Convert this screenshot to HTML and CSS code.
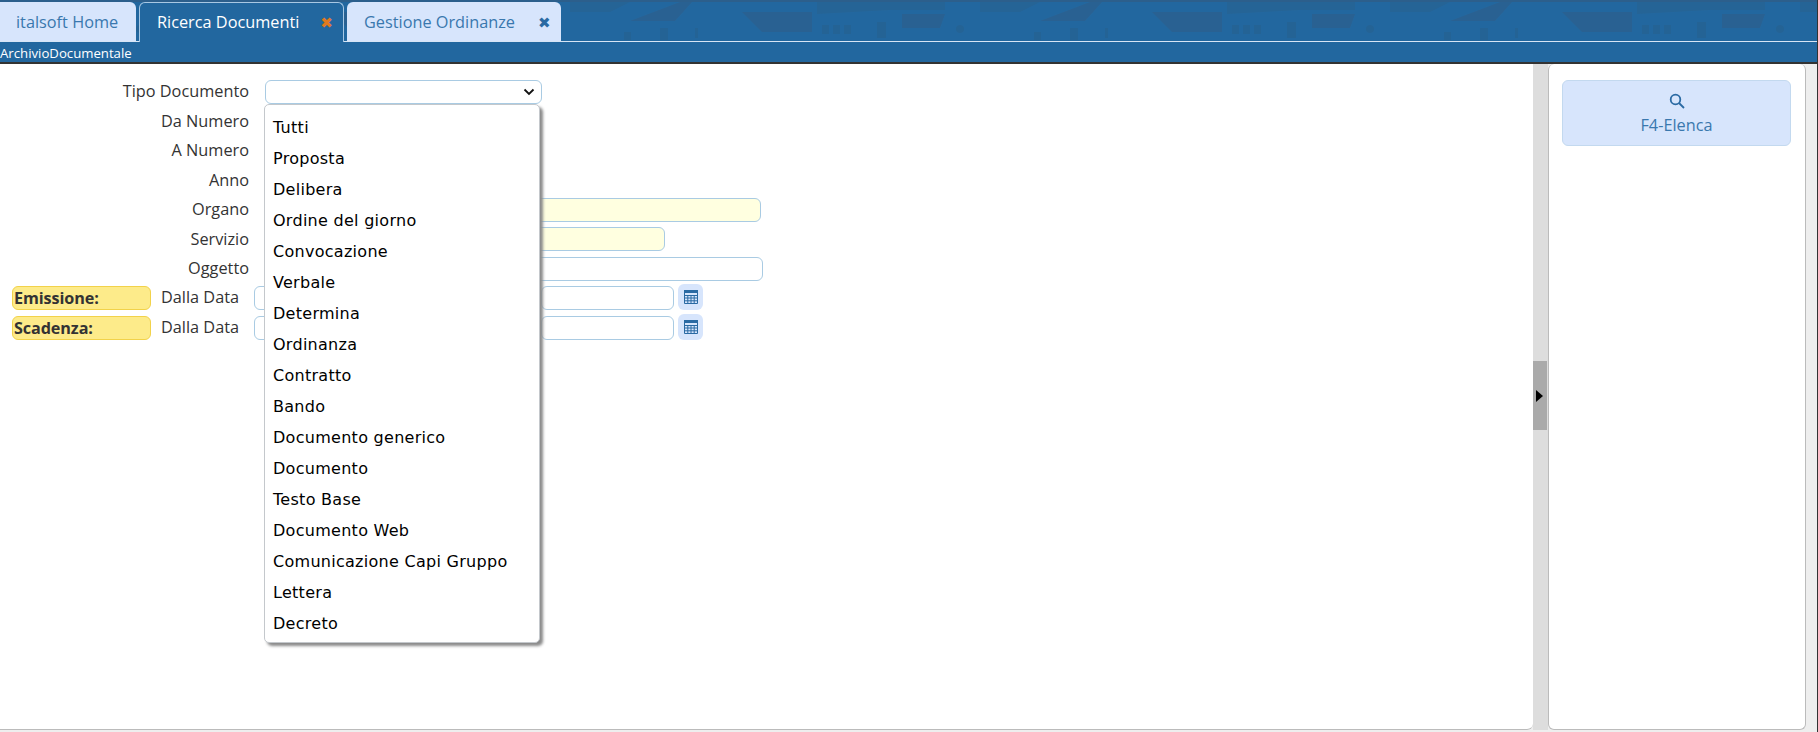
FILE: index.html
```html
<!DOCTYPE html>
<html lang="it">
<head>
<meta charset="utf-8">
<title>Ricerca Documenti</title>
<link rel="stylesheet" href="styles.css">
</head>
<body>
<header class="top">
  <svg class="pattern" width="1818" height="41" aria-hidden="true">
    <defs>
      <pattern id="skyline" patternUnits="userSpaceOnUse" width="410" height="41" patternTransform="translate(330 0)">
        <rect class="strip" width="410" height="2"/>
        <path class="d1" d="M2 12H72V32H22ZM162 14H205L200 28H162ZM300 21L350 2H362L345 21Z"/>
        <path class="d2" d="M77 2H205V10H150L77 14ZM240 2H300L280 12H240Z"/>
        <path class="d3" d="M82 25h7v9h-7ZM93 25h7v9h-7ZM104 25h7v9h-7ZM137 22h9v16h-9ZM294 32h7v8h-7ZM330 28h8v12h-8ZM365 28h3v10h-3Z"/>
        <circle class="d3" cx="220" cy="29" r="4"/>
      </pattern>
    </defs>
    <rect width="1818" height="41" fill="url(#skyline)"/>
  </svg>
  <nav class="tabs">
    <div class="tab tab-home">italsoft Home</div>
    <div class="tab tab-active">Ricerca Documenti<span class="close close-orange">✖</span></div>
    <div class="tab tab-third">Gestione Ordinanze<span class="close">✖</span></div>
  </nav>
  <div class="crumb">ArchivioDocumentale</div>
</header>
<main class="work">
  <section class="panel panel-main">
    <form class="form">
      <div class="row"><label class="lab">Tipo Documento</label>
        <div class="select"><svg class="chev" viewBox="0 0 12 8"><path d="M1.500 1.500 6 6l4.500-4.500"/></svg></div></div>
      <div class="row"><label class="lab">Da Numero</label><span class="field w-num"></span></div>
      <div class="row"><label class="lab">A Numero</label><span class="field w-num"></span></div>
      <div class="row"><label class="lab">Anno</label><span class="field w-num"></span></div>
      <div class="row"><label class="lab">Organo</label><span class="field yellow w-org"></span></div>
      <div class="row"><label class="lab">Servizio</label><span class="field yellow w-ser"></span></div>
      <div class="row"><label class="lab">Oggetto</label><span class="field w-ogg"></span></div>
      <div class="row date-row">
        <span class="tag">Emissione:</span><span class="dal">Dalla Data</span>
        <span class="field w-date"></span><span class="field w-date2"></span>
        <span class="cal"><svg viewBox="0 0 14 14"><path class="cal-head" d="M0 0H14V3H0Z"/><path class="cal-grid" d="M.5.5H13.500V13.500H.5ZM.5 5.500H13.500M.5 8H13.500M.5 10.800H13.500M3.800 5.500V13.500M7 5.500V13.500M10.200 5.500V13.500"/></svg></span>
      </div>
      <div class="row date-row">
        <span class="tag">Scadenza:</span><span class="dal">Dalla Data</span>
        <span class="field w-date"></span><span class="field w-date2"></span>
        <span class="cal"><svg viewBox="0 0 14 14"><path class="cal-head" d="M0 0H14V3H0Z"/><path class="cal-grid" d="M.5.5H13.500V13.500H.5ZM.5 5.500H13.500M.5 8H13.500M.5 10.800H13.500M3.800 5.500V13.500M7 5.500V13.500M10.200 5.500V13.500"/></svg></span>
      </div>
    </form>
    <ul class="menu">
      <li>Tutti</li><li>Proposta</li><li>Delibera</li><li>Ordine del giorno</li><li>Convocazione</li><li>Verbale</li><li>Determina</li><li>Ordinanza</li><li>Contratto</li><li>Bando</li><li>Documento generico</li><li>Documento</li><li>Testo Base</li><li>Documento Web</li><li>Comunicazione Capi Gruppo</li><li>Lettera</li><li>Decreto</li>
    </ul>
  </section>
  <div class="splitter"><div class="handle"><span class="arrow"></span></div></div>
  <aside class="panel panel-side">
    <button class="action" type="button">
      <svg viewBox="0 0 16 16"><circle cx="6.500" cy="6.500" r="4.800"/><path d="m10 10 5 5"/></svg>
      <span>F4-Elenca</span>
    </button>
  </aside>
</main>
</body>
</html>
```
FILE: styles.css
```css
* { box-sizing: border-box; }
html, body { margin: 0; height: 100%; }
body {
  width: 1818px; height: 732px; overflow: hidden;
  display: flex; flex-direction: column;
  background: #eee;
  border-right: 1px solid #333;
  font-family: "Open Sans", sans-serif;
  color: #333;
}
.top {
  position: relative; height: 64px; flex: none;
  background: #22679f;
  border-bottom: 2px solid #333;
}
.pattern { position: absolute; left: 0; top: 0; }
.strip { fill: #2c5f8c; }
.d1 { fill: #296192; }
.d2 { fill: #256496; }
.d3 { fill: #246395; }
.tabs {
  position: relative; display: flex; height: 42px; padding-top: 2px; gap: 3px;
  border-bottom: 1px solid #d7e5f5;
}
.tab {
  height: 39px; padding: 0 16px; border-radius: 6px 6px 0 0;
  background: #d7e5fc; color: #3a78ae;
  font-size: 16.300px; line-height: 40px; white-space: nowrap;
}
.tab-home { width: 136px; border-radius: 0 6px 0 0; }
.tab-active {
  width: 205px; height: 40px; padding-left: 17px;
  background: #22679f; color: #fff;
  border: 1px solid #a8c8e4; border-bottom: 0;
  line-height: 38px;
}
.tab-third { width: 214px; padding-left: 17px; }
.close { margin-left: 23px; font-size: 15px; font-family: "DejaVu Sans", sans-serif; color: #2a6aa3; }
.close-orange { color: #e07a1f; margin-left: 21px; }
.crumb { position: relative; height: 20px; color: #fff; font-size: 13.200px; line-height: 23px; }

.work { flex: 1; display: flex; min-height: 0; padding-bottom: 2px; }
.panel { position: relative; background: #fff; border-bottom: 1px solid #bbb; }
.panel-main { width: 1533px; border-radius: 0 0 6px 0; padding-top: 13px; }
.splitter { width: 15px; background: #ddd; display: flex; align-items: center; }
.handle {
  width: 14px; height: 69px; background: #aaa; margin-top: -3px;
  display: flex; align-items: center; padding-left: 3px;
}
.arrow { width: 0; height: 0; border-left: 7px solid #000; border-top: 6px solid transparent; border-bottom: 6px solid transparent; }
.panel-side {
  width: 258px; border: 1px solid #bbb; border-top: 0; border-radius: 6px;
  padding: 16px 13px;
}
.action {
  display: flex; flex-direction: column; align-items: center; gap: 5px;
  width: 229px; height: 66px; padding: 12px 0 0;
  background: #d7e5fc; border: 1px solid #c3d9ef; border-radius: 6px;
  color: #3a78ae; font: 16.300px "Open Sans", sans-serif;
}
.action svg { width: 16px; height: 16px; fill: none; stroke: #2a6aa3; stroke-width: 1.800; }

.form { display: flex; flex-direction: column; }
.row { display: flex; align-items: center; height: 29.500px; }
.lab { width: 249px; padding-bottom: 1px; text-align: right; font-size: 16.300px; margin-right: 16px; flex: none; }
.select, .field { height: 24px; border: 1px solid #a9cbe3; border-radius: 6px; background: #fff; flex: none; }
.select { position: relative; width: 277px; }
.chev { position: absolute; right: 6px; top: 7px; width: 12px; height: 8px; fill: none; stroke: #111; stroke-width: 1.800; }
.w-num { width: 120px; }
.yellow { background: #ffffe0; }
.w-org { width: 496px; }
.w-ser { width: 400px; }
.w-ogg { width: 498px; }
.date-row { padding-left: 12px; }
.tag {
  width: 139px; height: 24px; flex: none; padding-left: 1px;
  background: #fdeb8a; border: 1px solid #f2d24a; border-radius: 6px;
  font-size: 16.200px; font-weight: 700; line-height: 22px; color: #333; letter-spacing: -.1px;
}
.dal { width: 103px; padding: 0 0 2px 10px; flex: none; font-size: 16.300px; }
.w-date { width: 132px; margin-right: 155px; }
.w-date2 { width: 133px; }
.cal {
  flex: none; width: 25px; height: 26px; margin: -2px 0 0 4px;
  background: #d7e5fc; border-radius: 6px;
  display: flex; align-items: center; justify-content: center;
}
.cal svg { width: 14px; height: 14px; }
.cal-head { fill: #2a6aa3; }
.cal-grid { fill: none; stroke: #2a6aa3; stroke-width: 1; }

.menu {
  position: absolute; left: 264px; top: 40px; z-index: 2;
  width: 276px; height: 539px; margin: 0; padding: 7px 0 0; list-style: none;
  background: #fff; border: 1px solid #c4c8cc; border-radius: 5px;
  box-shadow: 3px 3px 3px #8a8a8a;
}
.menu li {
  height: 31px; padding-left: 8px;
  font: 16px/31px "DejaVu Sans", sans-serif; letter-spacing: .28px; color: #000; white-space: nowrap;
}
```
